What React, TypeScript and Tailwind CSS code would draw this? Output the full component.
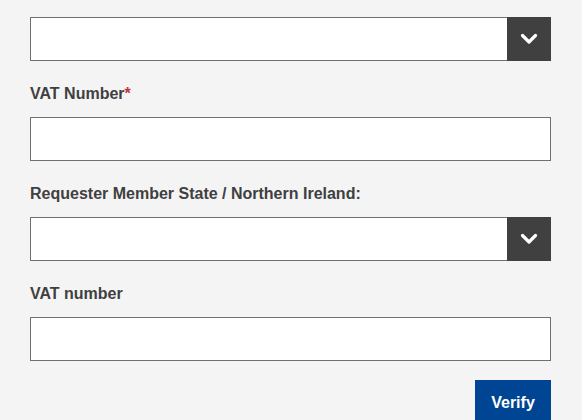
import React from 'react';

function Chevron() {
  return (
    <svg width="18" height="12" viewBox="0 0 18 12" fill="none">
      <path d="M2.5 2.5 L9 9 L15.5 2.5" stroke="#fff" strokeWidth="3.2" strokeLinecap="round" strokeLinejoin="round" />
    </svg>
  );
}

function Select() {
  return (
    <div className="flex h-[44px] w-full">
      <div className="flex-1 border border-[#707070] border-r-0 bg-white" />
      <div className="flex w-[44px] items-center justify-center bg-[#404040]">
        <Chevron />
      </div>
    </div>
  );
}

function Input() {
  return <input type="text" className="block h-[44px] w-full border border-[#707070] bg-white px-3 outline-none" />;
}

function Label({ children, required }: { children: React.ReactNode; required?: boolean }) {
  return (
    <label className="mb-[11px] block pt-px text-[16px] font-bold leading-[24px] text-[#404040]">
      {children}
      {required && <span className="text-[#c8303f]">*</span>}
    </label>
  );
}

export default function App() {
  return (
    <div className="min-h-[420px] bg-[#f4f4f4] pl-[30px] pr-[31px] pt-[17px]" style={{ fontFamily: '"Liberation Sans", Arial, sans-serif' }}>
      <div className="mb-5">
        <Select />
      </div>
      <div className="mb-5">
        <Label required>VAT Number</Label>
        <Input />
      </div>
      <div className="mb-5">
        <Label>Requester Member State / Northern Ireland:</Label>
        <Select />
      </div>
      <div className="mb-[19px]">
        <Label>VAT number</Label>
        <Input />
      </div>
      <div className="flex justify-end">
        <button className="h-[44px] w-[76px] bg-[#004494] pt-px text-[16px] font-bold text-white">Verify</button>
      </div>
    </div>
  );
}
